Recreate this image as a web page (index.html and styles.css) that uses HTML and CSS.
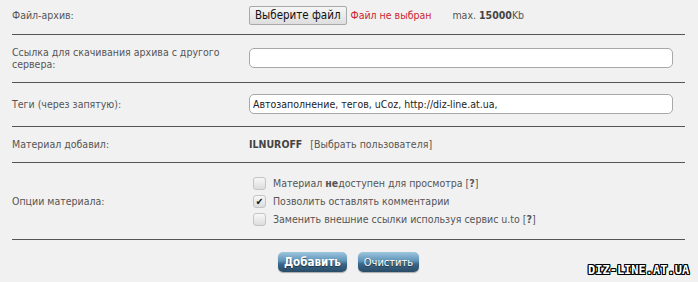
FILE: index.html
```html
<!DOCTYPE html>
<html lang="ru">
<head>
  <meta charset="UTF-8" />
  <title>Добавить материал</title>
  <link rel="stylesheet" href="styles.css">
</head>
<body>
<div class="form">
    <div class="row first">
        <div class="label">Файл-архив:</div>
        <div class="value">
            <span class="file-btn">Выберите файл</span>
            <span class="no-file">Файл не выбран</span>
            <span class="max">max. <b>15000</b>Kb</span>
        </div>
    </div>
    <div class="row">
        <div class="label">Ссылка для скачивания архива с другого сервера:</div>
        <div class="value"><input class="field" type="text" value=""></div>
    </div>
    <div class="row">
        <div class="label">Теги (через запятую):</div>
        <div class="value"><input class="field" type="text" value="Автозаполнение, тегов, uCoz, http://diz-line.at.ua,"></div>
    </div>
    <div class="row">
        <div class="label">Материал добавил:</div>
        <div class="value"><b class="user">ILNUROFF</b> <span class="pick">[Выбрать пользователя]</span></div>
    </div>
    <div class="row">
        <div class="label">Опции материала:</div>
        <div class="value options">
            <label class="opt"><span class="check"></span><span>Материал <b>не</b>доступен для просмотра [<b>?</b>]</span></label>
            <label class="opt"><span class="check checked">&#10004;</span><span>Позволить оставлять комментарии</span></label>
            <label class="opt"><span class="check"></span><span>Заменить внешние ссылки используя сервис u.to [<b>?</b>]</span></label>
        </div>
    </div>
    <div class="buttons">
        <button class="btn bold">Добавить</button>
        <button class="btn">Очистить</button>
    </div>
</div>
<div class="watermark">DIZ-LINE.AT.UA</div>
</body>
</html>
```

FILE: styles.css
```css
body {
  margin: 0;
  background-color: #f1f1f1;
  font-family: Tahoma, "DejaVu Sans Condensed", "DejaVu Sans", sans-serif;
  font-size: 10.5px;
  color: #555;
  height: 282px;
  overflow: hidden;
}

.form {
  margin-left: 12px;
  width: 673px;
}

.row {
  display: grid;
  grid-template-columns: 237px 1fr;
  align-items: center;
  padding: 11px 0 12px;
  border-bottom: 1px solid #555;
}

.row.first {
  padding: 5px 0 9px;
  height: 20px;
}

.label {
  padding-right: 10px;
  line-height: 12px;
}

.value {
  display: flex;
  align-items: center;
}

.file-btn {
  display: inline-block;
  height: 17px;
  line-height: 17px;
  padding: 0 5px;
  border: 1px solid #a9a9a9;
  border-radius: 2px;
  background: linear-gradient(#f6f6f6, #dedede);
  color: #111;
  font-size: 11.5px;
}

.no-file {
  color: #cc2530;
  margin-left: 4px;
}

.max {
  margin-left: 21px;
}

.max b {
  color: #444;
}

.field {
  box-sizing: border-box;
  width: 424px;
  height: 20px;
  border: 1px solid #a8a8a8;
  border-radius: 5px;
  background: #fff;
  padding: 0 3px;
  font-family: inherit;
  font-size: 10.5px;
  color: #222;
}

.user {
  color: #444;
  margin-right: 8px;
}

.options {
  flex-direction: column;
  align-items: flex-start;
  padding-left: 4px;
  margin-bottom: -1px;
}

.opt {
  display: flex;
  align-items: center;
  height: 18px;
}

.check {
  box-sizing: border-box;
  width: 13px;
  height: 13px;
  margin-right: 7px;
  border: 1px solid #c4c4c4;
  border-radius: 3px;
  background: linear-gradient(#f8f8f8, #dcdcdc);
  font-size: 10px;
  line-height: 11px;
  text-align: center;
  color: #111;
}

.buttons {
  display: flex;
  justify-content: center;
  gap: 11px;
  padding-top: 12px;
}

.btn {
  height: 20px;
  padding: 0 6px;
  border: none;
  border-radius: 5px;
  background: linear-gradient(#9cc6e0, #5f93b6 45%, #3a6688 60%, #2a4c66);
  color: #fff;
  font-family: inherit;
  font-size: 11px;
  text-shadow: 0 1px 1px #1c3446;
  box-shadow: 0 1px 1px rgba(0,0,0,0.3);
}

.btn.bold {
  font-weight: bold;
  font-size: 11.5px;
}

.watermark {
  position: absolute;
  left: 588px;
  top: 263px;
  font-family: "DejaVu Sans Mono", monospace;
  font-weight: bold;
  font-size: 12px;
  letter-spacing: 0;
  color: #fff;
  text-shadow: 1px 0 #000, -1px 0 #000, 0 1px #000, 0 -1px #000, 1px 1px #000, -1px -1px #000, 1px -1px #000, -1px 1px #000;
}
```
